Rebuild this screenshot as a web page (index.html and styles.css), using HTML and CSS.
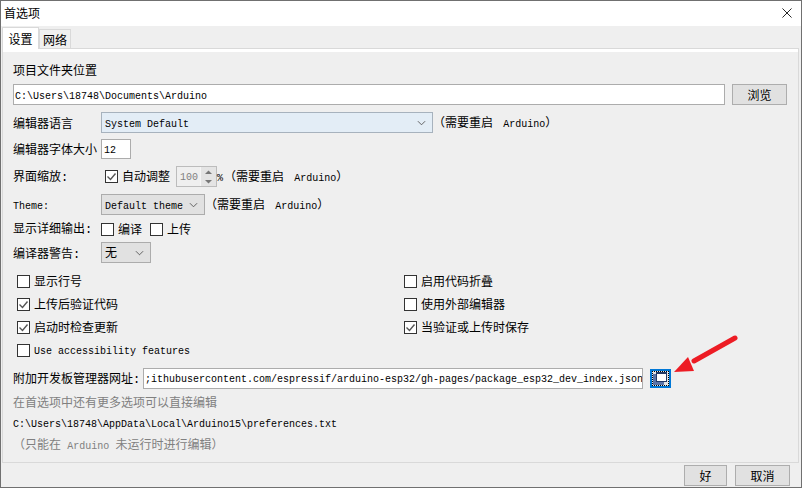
FILE: index.html
```html
<!DOCTYPE html>
<html lang="zh">
<head>
<meta charset="utf-8">
<title>首选项</title>
<link rel="stylesheet" href="styles.css">
</head>
<body>
<svg width="0" height="0" class="defs"><defs>
  <symbol id="chev" viewBox="0 0 10 6"><path d="M1 1l4 4 4-4" fill="none" stroke="#555" stroke-width="1"/></symbol>
  <symbol id="tick" viewBox="0 0 13 13"><path d="M2.500 6.500l3 3 5-6" fill="none" stroke="#555" stroke-width="1.400"/></symbol>
</defs></svg>
<div class="window">
  <header class="titlebar">
    <span>首选项</span>
    <svg class="close" width="11" height="11" viewBox="0 0 11 11"><path d="M.5.5l10 10M10.500.5l-10 10" stroke="#111" stroke-width="1" fill="none"/></svg>
  </header>
  <nav class="tabs">
    <div class="tab active">设置</div>
    <div class="tab">网络</div>
  </nav>
  <main class="panel">
    <div class="row label-row">项目文件夹位置</div>
    <div class="row path-row">
      <div class="field grow">C:\Users\18748\Documents\Arduino</div>
      <div class="btn browse">浏览</div>
    </div>
    <div class="row lang-row">
      <span class="lbl">编辑器语言</span>
      <div class="select lang">System Default<svg class="chev"><use href="#chev"/></svg></div>
      <span class="note">（需要重启 <span class="latin">Arduino</span>）</span>
    </div>
    <div class="row size-row">
      <span class="lbl">编辑器字体大小</span>
      <div class="field size">12</div>
    </div>
    <div class="row zoom-row">
      <span class="lbl">界面缩放:</span>
      <label class="opt opt-auto"><span class="box"><svg><use href="#tick"/></svg></span><span class="txt">自动调整</span></label>
      <div class="spinner">
        <span class="spin-val">100</span>
        <span class="spin-btns">
          <svg width="11" height="7" viewBox="0 0 11 7"><path d="M2 5l3.500-3.500L9 5z" fill="#777"/></svg>
          <svg width="11" height="7" viewBox="0 0 11 7"><path d="M2 2l3.500 3.500L9 2z" fill="#777"/></svg>
        </span>
      </div>
      <span class="pct">%</span>
      <span class="note note-zoom">（需要重启 <span class="latin">Arduino</span>）</span>
    </div>
    <div class="row theme-row">
      <span class="lbl">Theme:</span>
      <div class="select theme">Default theme<svg class="chev"><use href="#chev"/></svg></div>
      <span class="note">（需要重启 <span class="latin">Arduino</span>）</span>
    </div>
    <div class="row detail-row">
      <span class="lbl">显示详细输出:</span>
      <label class="opt"><span class="box"></span><span class="txt">编译</span></label>
      <label class="opt opt-second"><span class="box"></span><span class="txt">上传</span></label>
    </div>
    <div class="row warn-row">
      <span class="lbl">编译器警告:</span>
      <div class="select warn">无<svg class="chev"><use href="#chev"/></svg></div>
    </div>
    <div class="options">
      <label class="opt"><span class="box"></span>显示行号</label>
      <label class="opt"><span class="box"></span>启用代码折叠</label>
      <label class="opt"><span class="box"><svg><use href="#tick"/></svg></span>上传后验证代码</label>
      <label class="opt"><span class="box"></span>使用外部编辑器</label>
      <label class="opt"><span class="box"><svg><use href="#tick"/></svg></span>启动时检查更新</label>
      <label class="opt"><span class="box"><svg><use href="#tick"/></svg></span>当验证或上传时保存</label>
      <label class="opt"><span class="box"></span>Use accessibility features</label>
    </div>
    <div class="row url-row">
      <span class="url-lbl">附加开发板管理器网址:</span>
      <div class="field url">;ithubusercontent.com/espressif/arduino-esp32/gh-pages/package_esp32_dev_index.json</div>
      <div class="icon-btn">
        <span class="icon-inner">
          <span class="icon-back"></span>
          <span class="icon-front"></span>
        </span>
      </div>
    </div>
    <div class="info muted first">在首选项中还有更多选项可以直接编辑</div>
    <div class="info pathline">C:\Users\18748\AppData\Local\Arduino15\preferences.txt</div>
    <div class="info muted last">（只能在 <span class="latin">Arduino</span> 未运行时进行编辑）</div>
  </main>
  <footer class="footer">
    <div class="btn ok">好</div>
    <div class="btn cancel">取消</div>
  </footer>
  <svg class="arrow" width="80" height="50" viewBox="0 0 80 50"><path d="M63 6L22 29" stroke="#ed1c24" stroke-width="5" stroke-linecap="round" fill="none"/><path d="M2 40L16 25 22 39z" fill="#ed1c24"/></svg>
</div>
</body>
</html>
```
FILE: styles.css
```css
* { box-sizing: border-box; }
html, body { margin: 0; padding: 0; }
body {
  width: 802px;
  height: 488px;
  overflow: hidden;
  font: 12px/16px "Liberation Mono", "Noto Sans CJK SC", monospace;
  color: #000;
}
.defs { position: absolute; }
.window {
  position: relative;
  width: 802px;
  height: 488px;
  border: 1px solid #707070;
  background: #efefef;
  display: flex;
  flex-direction: column;
}
.titlebar {
  height: 25px;
  flex: none;
  background: #fff;
  display: flex;
  align-items: center;
  justify-content: space-between;
  padding: 0 9px 1px 3px;
  font-family: "Noto Sans CJK SC", sans-serif;
}
.close { width: 10px; height: 10px; }
.tabs {
  height: 22px;
  flex: none;
  display: flex;
  align-items: flex-end;
  padding-left: 1px;
  font-family: "Noto Sans CJK SC", sans-serif;
}
.tab {
  width: 32px;
  height: 19px;
  background: #f0f0f0;
  border: 1px solid #d9d9d9;
  border-bottom: 0;
  text-align: center;
  line-height: 19px;
}
.tab.active {
  width: 37px;
  height: 22px;
  background: #fff;
  line-height: 21px;
  position: relative;
  z-index: 1;
  margin-bottom: -1px;
}
.panel {
  flex: none;
  height: 415px;
  margin: 0 2px 0 1px;
  border: 1px solid #d9d9d9;
  padding: 0 10px 0 10px;
  position: relative;
}
.panel::before {
  content: "";
  display: block;
  height: 3px;
  margin: 0 -10px;
  background: #fff;
}
.latin { font-size: 10px; }
.row { display: flex; align-items: center; }
.lbl { width: 88px; flex: none; padding-top: 4px; }
.label-row { height: 16px; margin-top: 12px; }
.path-row { height: 21px; margin-top: 4px; margin-right: 1px; }
.lang-row { height: 21px; margin-top: 7px; }
.size-row { height: 20px; margin-top: 6px; }
.zoom-row { height: 21px; margin-top: 7px; }
.theme-row { height: 21px; margin-top: 7px; }
.detail-row { height: 16px; margin-top: 6px; }
.warn-row { height: 21px; margin-top: 5px; }
.theme-row .lbl { font-size: 10px; }
.zoom-row .lbl, .detail-row .lbl { padding-top: 2px; }
.field {
  height: 100%;
  background: #fff;
  border: 1px solid #acacac;
  font-size: 10px;
  line-height: 23px;
  padding-left: 1px;
  white-space: nowrap;
  overflow: hidden;
}
.grow { flex: 1; }
.btn {
  width: 55px;
  height: 21px;
  background: #e1e1e1;
  border: 1px solid #adadad;
  text-align: center;
  line-height: 19px;
  font-family: "Noto Sans CJK SC", sans-serif;
}
.browse { margin-left: 7px; flex: none; }
.select {
  height: 21px;
  background: #e1e1e1;
  border: 1px solid #acacac;
  font-size: 10px;
  line-height: 23px;
  padding-left: 3px;
  position: relative;
  flex: none;
}
.chev { position: absolute; right: 6px; top: 7px; width: 9px; height: 6px; }
.lang { width: 332px; background: #e3edf6; border-color: #a7b2bd; }
.theme { width: 104px; }
.warn { width: 50px; font-size: 12px; }
.note { white-space: nowrap; padding-top: 4px; }
.note .latin { margin-left: 3px; }
.note-zoom { margin-left: 1px; }
.field.size { width: 30px; flex: none; padding-left: 2px; line-height: 21px; }
.opt { display: flex; align-items: center; white-space: nowrap; }
.opt-auto { margin-left: 4px; }
.opt-second { margin-left: 8px; }
.txt { padding-top: 3px; }
.box {
  width: 13px;
  height: 13px;
  flex: none;
  margin-right: 4px;
  background: #fff;
  border: 1px solid #333;
  display: block;
  position: relative;
}
.box svg { position: absolute; left: -1px; top: -1px; width: 13px; height: 13px; }
.options .box { margin-top: -2px; }
.spinner {
  width: 41px;
  height: 21px;
  margin-left: 6px;
  background: #efefef;
  border: 1px solid #bcbcbc;
  display: flex;
  font-size: 10px;
  line-height: 21px;
  color: #808080;
}
.spin-val { width: 23px; padding-left: 3px; }
.spin-btns { width: 16px; background: #e4e4e4; display: flex; flex-direction: column; align-items: center; justify-content: center; border-left: 1px solid #f5f5f5; }
.spin-btns svg { display: block; margin: 1px 0; }
.pct { font-size: 10px; padding-top: 4px; }
.options {
  display: grid;
  grid-template-columns: 387px 1fr;
  grid-auto-rows: 23px;
  align-items: center;
  margin: 8px 0 0 4px;
}
.options .opt:last-child { font-size: 10px; }
.url-row { height: 21px; margin-top: 5px; }
.url-lbl { width: 130px; flex: none; white-space: nowrap; padding-top: 2px; }
.field.url { width: 500px; flex: none; padding-left: 1px; line-height: 21px; }
.icon-btn {
  width: 21px;
  height: 19px;
  margin-left: 7px;
  border: 2px solid #0078d7;
  background: #f0f0f0;
  flex: none;
}
.icon-inner {
  display: block;
  position: relative;
  width: 17px;
  height: 15px;
  border: 1px dotted #000;
  background: #e4e4e4;
}
.icon-back { position: absolute; left: 0; top: 2px; width: 11px; height: 11px; background: #5a74a8; }
.icon-front { position: absolute; left: 3px; top: 0; width: 11px; height: 10px; background: #fff; border: 1px solid #223a66; border-top-width: 2px; }
.info { height: 21px; font-size: 10px; white-space: nowrap; }
.info.muted { color: #808080; font-size: 12px; }
.info.first { margin-top: 3px; line-height: 24px; }
.info.pathline { line-height: 23px; }
.info.last { line-height: 24px; word-spacing: -1px; }
.footer {
  flex: 1;
  display: flex;
  justify-content: flex-end;
  padding: 2px 11px 0 0;
}
.btn.ok { width: 43px; height: 21px; }
.btn.cancel { width: 55px; height: 21px; margin-left: 8px; }
.arrow { position: absolute; left: 671px; top: 331px; pointer-events: none; }
```
